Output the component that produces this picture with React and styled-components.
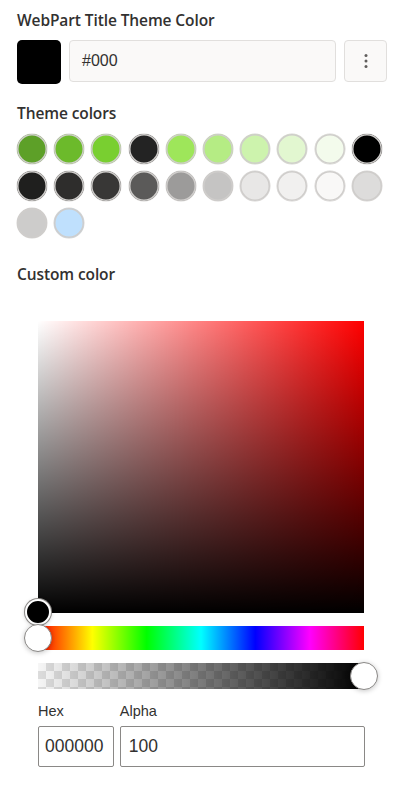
import React from "react";
import styled, { createGlobalStyle } from "styled-components";

const Global = createGlobalStyle`
  html, body { margin: 0; padding: 0; background: #ffffff; }
  body { font-family: "Open Sans", "Noto Sans", Arial, sans-serif; color: #323130; }
  * { box-sizing: border-box; }
`;

const Page = styled.div`
  width: 402px;
  padding: 9px 15px 20px 17px;
  display: flex;
  flex-direction: column;
`;

const Heading = styled.div`
  font-size: 15.5px;
  font-weight: 600;
  line-height: 22px;
  color: #323130;
  margin-top: ${(p) => p.$mt || 0}px;
  letter-spacing: -0.1px;
`;

const ColorRow = styled.div`
  display: flex;
  align-items: flex-start;
  gap: 8px;
  margin-top: 9px;
`;

const Swatch = styled.div`
  width: 44px;
  height: 44px;
  border-radius: 5px;
  background: ${(p) => p.$color};
`;

const TextInput = styled.div`
  flex: 1;
  height: 42px;
  border: 1px solid #e1dfdd;
  border-radius: 4px;
  background: #faf9f8;
  display: flex;
  align-items: center;
  padding-left: 12px;
  font-family: "Liberation Sans", Arial, sans-serif;
  font-size: 16px;
  color: #323130;
`;

const MoreButton = styled.button`
  width: 43px;
  height: 42px;
  border: 1px solid #e1dfdd;
  border-radius: 4px;
  background: #faf9f8;
  display: flex;
  align-items: center;
  justify-content: center;
  padding: 0;
`;

const SwatchGrid = styled.div`
  display: grid;
  grid-template-columns: repeat(10, 30px);
  column-gap: 7.2px;
  row-gap: 7px;
  margin-top: 10px;
`;

const Circle = styled.div`
  width: 30px;
  height: 30px;
  border-radius: 50%;
  background: ${(p) => p.$color};
  box-shadow: 0 0 0 1.5px #cfcdcb inset, 0 0 0 0.5px #d6d4d2;
`;

const Picker = styled.div`
  margin-top: 36px;
  padding-left: 21px;
  width: 348px;
  display: flex;
  flex-direction: column;
`;

const Rect = styled.div`
  position: relative;
  width: 326px;
  height: 292px;
  background:
    linear-gradient(to bottom, rgba(0,0,0,0), #000),
    linear-gradient(to right, #fff, rgba(255,255,255,0)),
    #ff0000;
`;

const SatThumb = styled.div`
  position: absolute;
  left: -13px;
  bottom: -12px;
  width: 26px;
  height: 26px;
  border-radius: 50%;
  background: #000;
  border: 2px solid #fff;
  box-shadow: 0 0 0 1px #8a8886, 0 1px 4px rgba(0,0,0,0.25);
`;

const Bar = styled.div`
  position: relative;
  width: 326px;
  height: ${(p) => p.$h}px;
  margin-top: 13px;
  background: ${(p) => p.$bg};
`;

const BarThumb = styled.div`
  position: absolute;
  top: 50%;
  left: ${(p) => (p.$end ? "100%" : "0")};
  width: 28px;
  height: 28px;
  margin: -14px 0 0 -14px;
  border-radius: 50%;
  background: #fff;
  border: 1px solid #8a8886;
  box-shadow: 0 1px 5px rgba(0,0,0,0.22);
`;

const Fields = styled.div`
  display: flex;
  gap: 6px;
  margin-top: 12px;
`;

const Field = styled.div`
  display: flex;
  flex-direction: column;
  width: ${(p) => p.$w}px;
`;

const FieldLabel = styled.div`
  font-family: "Liberation Sans", Arial, sans-serif;
  font-size: 14.5px;
  line-height: 20px;
  color: #323130;
`;

const FieldBox = styled.div`
  margin-top: 5px;
  height: 41px;
  border: 1px solid #8a8886;
  border-radius: 2px;
  display: flex;
  align-items: center;
  padding-left: ${(p) => p.$pl}px;
  font-family: "Liberation Sans", Arial, sans-serif;
  font-size: 17.5px;
  color: #323130;
  overflow: hidden;
  white-space: nowrap;
`;

const themeColors = [
  "#5da028", "#6cba2b", "#79cf30", "#232323", "#9ee65a", "#b5ec84", "#cdf3ad", "#e2f7d0", "#f3fbec", "#000000",
  "#1f1f1e", "#2e2d2c", "#383736", "#5b5a59", "#9c9b9a", "#c5c4c3", "#e8e7e6", "#f1f0ef", "#f9f8f7", "#dddcdb",
  "#cdcccb", "#bfe0fd",
];

const checker =
  "linear-gradient(to right, rgba(0,0,0,0), #000), " +
  "repeating-conic-gradient(#dcdcdc 0% 25%, #f6f6f6 0% 50%) 0 0 / 16px 16px";

const hue =
  "linear-gradient(to right, #f00 0%, #ff0 16.66%, #0f0 33.33%, #0ff 50%, #00f 66.66%, #f0f 83.33%, #f00 100%)";

export default function App() {
  return (
    <Page>
      <Global />
      <Heading>WebPart Title Theme Color</Heading>
      <ColorRow>
        <Swatch $color="#000000" />
        <TextInput>#000</TextInput>
        <MoreButton aria-label="More">
          <svg width="4" height="16" viewBox="0 0 4 16">
            <circle cx="2" cy="2.5" r="1.5" fill="#605e5c" />
            <circle cx="2" cy="8" r="1.5" fill="#605e5c" />
            <circle cx="2" cy="13.5" r="1.5" fill="#605e5c" />
          </svg>
        </MoreButton>
      </ColorRow>
      <Heading $mt={18}>Theme colors</Heading>
      <SwatchGrid>
        {themeColors.map((c, i) => (
          <Circle key={i} $color={c} />
        ))}
      </SwatchGrid>
      <Heading $mt={25}>Custom color</Heading>
      <Picker>
        <Rect>
          <SatThumb />
        </Rect>
        <Bar $h={24} $bg={hue}>
          <BarThumb />
        </Bar>
        <Bar $h={26} $bg={checker}>
          <BarThumb $end />
        </Bar>
        <Fields>
          <Field $w={76}>
            <FieldLabel>Hex</FieldLabel>
            <FieldBox $pl={6}>000000</FieldBox>
          </Field>
          <Field $w={246}>
            <FieldLabel>Alpha</FieldLabel>
            <FieldBox $pl={8}>100</FieldBox>
          </Field>
        </Fields>
      </Picker>
    </Page>
  );
}
